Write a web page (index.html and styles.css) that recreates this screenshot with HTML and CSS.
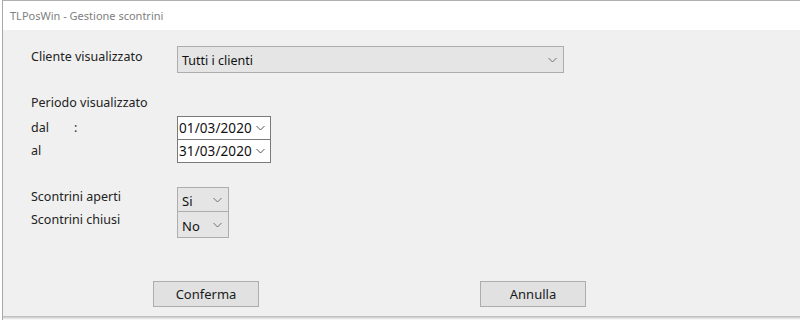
FILE: index.html
```html
<!DOCTYPE html>
<html>
<head>
<meta charset="utf-8">
<link rel="stylesheet" href="styles.css">
</head>
<body>
<div class="window">
  <div class="titlebar">TLPosWin - Gestione scontrini</div>
  <div class="client">
    <div class="row row-cliente">
      <div class="label">Cliente visualizzato</div>
      <div class="combo combo-wide"><span>Tutti i clienti</span><svg class="chev" width="9" height="6" viewBox="0 0 9 6"><path d="M0.5 1 L4.5 5 L8.5 1" fill="none" stroke="#707070" stroke-width="1"/></svg></div>
    </div>
    <div class="section-title">Periodo visualizzato</div>
    <div class="row row-date">
      <div class="label">dal<span class="colon">:</span></div>
      <div class="datebox"><span>01/03/2020</span><svg class="chev" width="9" height="6" viewBox="0 0 9 6"><path d="M0.5 1 L4.5 5 L8.5 1" fill="none" stroke="#555" stroke-width="1"/></svg></div>
    </div>
    <div class="row row-date row-date2">
      <div class="label">al</div>
      <div class="datebox"><span>31/03/2020</span><svg class="chev" width="9" height="6" viewBox="0 0 9 6"><path d="M0.5 1 L4.5 5 L8.5 1" fill="none" stroke="#555" stroke-width="1"/></svg></div>
    </div>
    <div class="row row-small first-small">
      <div class="label">Scontrini aperti</div>
      <div class="combo combo-small"><span>Si</span><svg class="chev" width="9" height="6" viewBox="0 0 9 6"><path d="M0.5 1 L4.5 5 L8.5 1" fill="none" stroke="#707070" stroke-width="1"/></svg></div>
    </div>
    <div class="row row-small second-small">
      <div class="label">Scontrini chiusi</div>
      <div class="combo combo-small"><span>No</span><svg class="chev" width="9" height="6" viewBox="0 0 9 6"><path d="M0.5 1 L4.5 5 L8.5 1" fill="none" stroke="#707070" stroke-width="1"/></svg></div>
    </div>
    <div class="buttons">
      <div class="btn btn-ok">Conferma</div>
      <div class="btn btn-cancel">Annulla</div>
    </div>
  </div>
  <div class="shadow"></div>
</div>
</body>
</html>
```
FILE: styles.css
```css
html, body {
  margin: 0;
  padding: 0;
  background: #ffffff;
}
body {
  width: 800px;
  height: 323px;
  overflow: hidden;
  font-family: "Noto Sans", "Open Sans", sans-serif;
  color: #222222;
}
.window {
  border-top: 1px solid #b0b0b0;
  margin-left: 2px;
  border-left: 1px solid #a8a8a8;
}
.titlebar {
  height: 29px;
  background: #ffffff;
  color: #808080;
  font-size: 11px;
  line-height: 30px;
  padding-left: 7px;
}
.client {
  background: #f0f0f0;
  height: 286px;
  padding-left: 28px;
  box-sizing: border-box;
  padding-top: 16px;
  font-size: 12.5px;
}
.row {
  display: flex;
  align-items: flex-start;
}
.label {
  width: 146px;
  flex: none;
  color: #222222;
}
.row-cliente .label {
  padding-top: 2px;
}
.combo {
  box-sizing: border-box;
  background: #e5e5e5;
  border: 1px solid #adadad;
  display: flex;
  align-items: center;
  justify-content: space-between;
  padding-left: 4px;
  padding-right: 6px;
}
.combo span {
  font-size: 12.5px;
  color: #111;
  padding-top: 2px;
}
.combo-wide {
  width: 387px;
  height: 27px;
}
.section-title {
  margin-top: 22px;
  height: 16px;
  line-height: 16px;
}
.row-date {
  margin-top: 5px;
}
.row-date .label {
  padding-top: 3px;
}
.row-date2 {
  margin-top: -1px;
}
.row-date2 .label {
  padding-top: 3px;
}
.colon {
  margin-left: 25px;
}
.datebox {
  box-sizing: border-box;
  width: 94px;
  height: 24px;
  background: #ffffff;
  border: 1px solid #7a7a7a;
  display: flex;
  align-items: center;
  justify-content: space-between;
  padding-left: 1px;
  padding-right: 5px;
}
.datebox span {
  font-size: 13.5px;
  color: #111;
  letter-spacing: 0.1px;
}
.first-small {
  margin-top: 24px;
}
.second-small {
  margin-top: -1px;
}
.row-small .label {
  padding-top: 1px;
}
.second-small .label {
  padding-top: 0;
}
.first-small .combo-small {
  height: 25px;
}
.combo-small {
  width: 52px;
  height: 27px;
}
.combo-small span {
  font-size: 13px;
  padding-top: 3px;
}
.buttons {
  display: flex;
  margin-top: 43px;
  padding-left: 122px;
  gap: 221px;
}
.btn {
  box-sizing: border-box;
  width: 106px;
  height: 26px;
  background: #e1e1e1;
  border: 1px solid #adadad;
  display: flex;
  align-items: center;
  justify-content: center;
  font-size: 13px;
  color: #1a1a1a;
}
.shadow {
  height: 4px;
  background: linear-gradient(#b8b8b8, #ffffff);
}
```
